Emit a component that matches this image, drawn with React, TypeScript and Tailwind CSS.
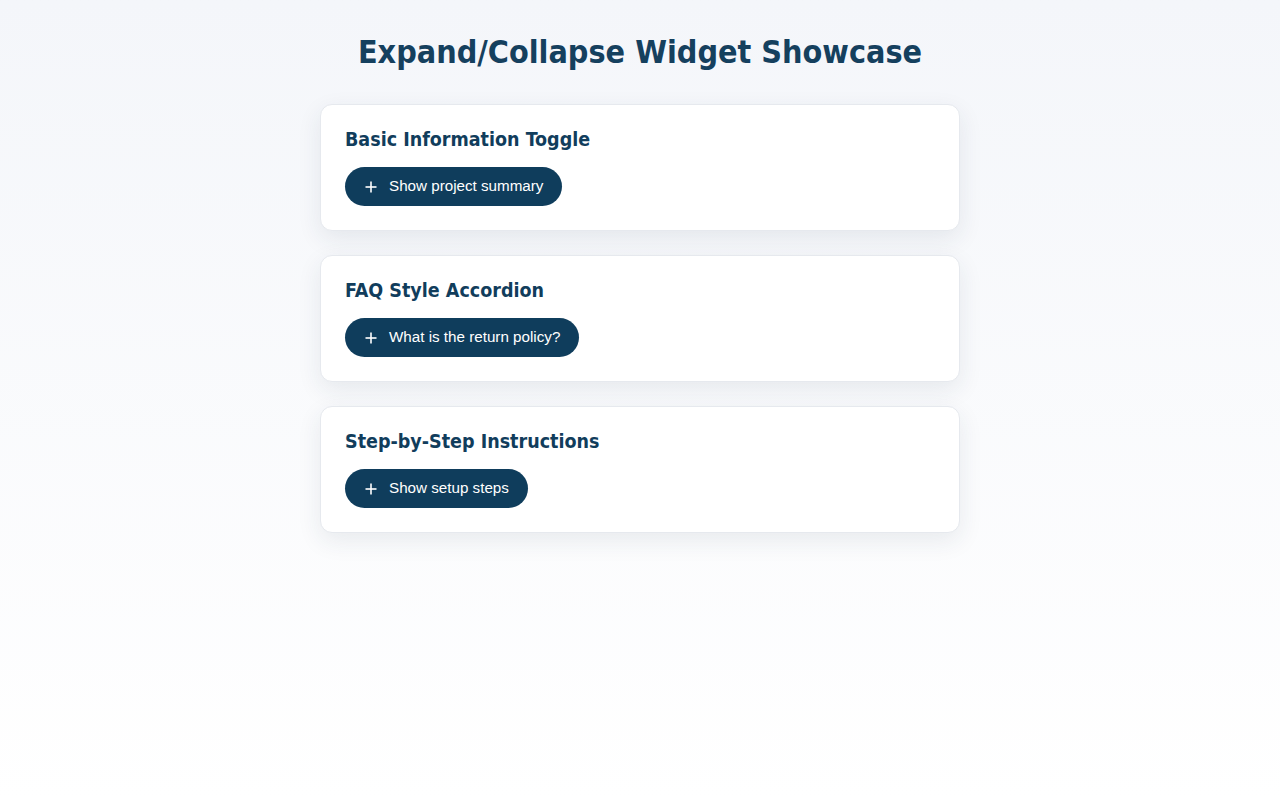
import { useState } from 'react';

interface Section {
  title: string;
  label: string;
  body: string[];
}

const sections: Section[] = [
  {
    title: 'Basic Information Toggle',
    label: 'Show project summary',
    body: ['This project demonstrates a simple expand/collapse pattern for progressively disclosing content.'],
  },
  {
    title: 'FAQ Style Accordion',
    label: 'What is the return policy?',
    body: ['Items can be returned within 30 days of purchase with the original receipt.'],
  },
  {
    title: 'Step-by-Step Instructions',
    label: 'Show setup steps',
    body: ['1. Install the package.', '2. Import the widget.', '3. Configure your options.'],
  },
];

function Toggle({ section }: { section: Section }) {
  const [open, setOpen] = useState(false);

  return (
    <div className="bg-white rounded-xl border border-[#e6e9ee] shadow-[0_8px_24px_rgba(30,50,80,0.09)] p-6">
      <h2 className="text-[19.5px] leading-[22px] font-bold text-[#113d5c] font-['DejaVu_Sans_Condensed','DejaVu_Sans',sans-serif] mb-4">
        {section.title}
      </h2>
      <button
        onClick={() => setOpen(!open)}
        className="inline-flex items-center gap-3 h-[39px] pl-5 pr-[19px] rounded-full bg-[#0f3d5c] text-white text-[15.2px] font-['Liberation_Sans',Arial,sans-serif]"
      >
        <svg width="12" height="12" viewBox="0 0 12 12" className="shrink-0">
          {!open && <path d="M6 0.5v11" stroke="white" strokeWidth="1.6" />}
          <path d="M0.5 6h11" stroke="white" strokeWidth="1.6" />
        </svg>
        <span>{section.label}</span>
      </button>
      {open && (
        <div className="mt-4 text-[15px] text-[#334155] font-['Liberation_Sans',Arial,sans-serif] space-y-1">
          {section.body.map((line, i) => (
            <p key={i}>{line}</p>
          ))}
        </div>
      )}
    </div>
  );
}

export default function App() {
  return (
    <div className="min-h-screen bg-gradient-to-b from-[#f4f6fa] to-white">
      <div className="max-w-[640px] mx-auto pt-8 pb-10">
        <h1 className="text-center text-[32px] leading-10 font-bold text-[#15405e] font-['DejaVu_Sans_Condensed','DejaVu_Sans',sans-serif] mb-8">
          Expand/Collapse Widget Showcase
        </h1>
        <div className="flex flex-col gap-6">
          {sections.map((s) => (
            <Toggle key={s.title} section={s} />
          ))}
        </div>
      </div>
    </div>
  );
}
